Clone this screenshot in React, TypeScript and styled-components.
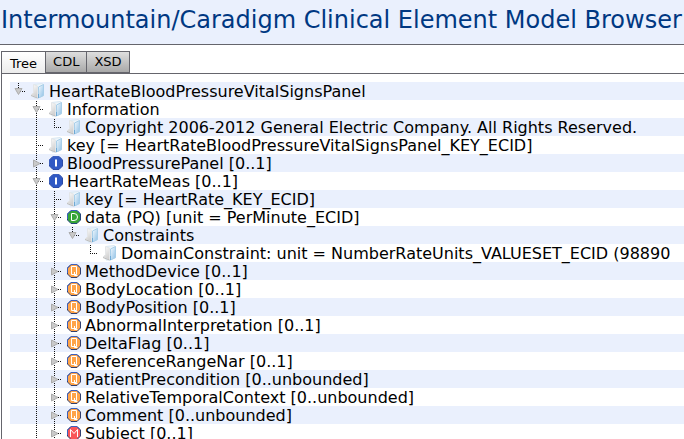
import React, { useState } from "react";
import styled, { createGlobalStyle, css } from "styled-components";

const line = "#65656c";
const stripe = "#eaf0fd";

const GlobalStyle = createGlobalStyle`
  * { box-sizing: border-box; }
  body { margin: 0; background: #fff; }
`;

const Page = styled.div`
  display: flex;
  flex-direction: column;
  height: 100vh;
  overflow: hidden;
  color: #000;
  font-family: "DejaVu Sans", Verdana, sans-serif;
`;

const Header = styled.header`
  flex: none;
  padding: 6px 0 9px 1px;
  background: ${stripe};
  border-bottom: 1px solid ${line};
`;

const Title = styled.h1`
  margin: 0;
  font-size: 24px;
  line-height: 29px;
  font-weight: 400;
  color: #003882;
  white-space: nowrap;
`;

const Tabs = styled.div`
  display: flex;
  flex: none;
  padding: 6px 0 0 1px;
`;

const Tab = styled.button<{ $active: boolean }>`
  height: 22px;
  margin: 0 -1px 0 0;
  padding: 0 7px;
  border: 1px solid ${line};
  background: linear-gradient(#dedede, #a9a9a9);
  color: #000;
  font-family: inherit;
  font-size: 13px;
  line-height: 18px;
  ${(p) =>
    p.$active &&
    css`
      padding: 2px 8px 0;
      border-bottom: 0;
      background: linear-gradient(#fff, #ececec);
    `}
`;

const Panel = styled.main`
  flex: 1;
  min-height: 0;
  margin-left: 1px;
  padding: 8px 0 0 8px;
  border: solid ${line};
  border-width: 1px 0 0 1px;
  overflow: hidden;
`;

const Tree = styled.ul`
  margin: 0;
  padding: 0;
  list-style: none;
`;

const Row = styled.li`
  display: flex;
  align-items: center;
  height: 18px;
  white-space: nowrap;
  font-size: 16px;
  line-height: 18px;
  &:nth-child(odd) { background: ${stripe}; }
`;

const Cell = styled.span`
  flex: none;
  width: 18px;
  height: 18px;
`;

const Toggle = styled.button`
  flex: none;
  width: 18px;
  height: 18px;
  padding: 0;
  border: 0;
  background: none;
`;

const Drawing = styled.svg`
  display: block;
  flex: none;
`;

const Label = styled.span`
  padding: 2px 0 0 3px;
`;

/* One character per column left of the icon:
   " " empty, "|" passing line, "t" branch, "l" last branch,
   "o" open, "c" closed, "e" open and last, "r" open root */
type Kind = "folder" | "I" | "D" | "Q" | "M";
type Item = [string, Kind, string];

const items: Item[] = [
  ["r", "folder", "HeartRateBloodPressureVitalSignsPanel"],
  [" o", "folder", "Information"],
  [" |l", "folder", "Copyright 2006-2012 General Electric Company. All Rights Reserved."],
  [" t", "folder", "key [= HeartRateBloodPressureVitalSignsPanel_KEY_ECID]"],
  [" c", "I", "BloodPressurePanel [0..1]"],
  [" o", "I", "HeartRateMeas [0..1]"],
  [" |t", "folder", "key [= HeartRate_KEY_ECID]"],
  [" |o", "D", "data (PQ) [unit = PerMinute_ECID]"],
  [" ||e", "folder", "Constraints"],
  [" || l", "folder", "DomainConstraint: unit = NumberRateUnits_VALUESET_ECID (98890"],
  [" |c", "Q", "MethodDevice [0..1]"],
  [" |c", "Q", "BodyLocation [0..1]"],
  [" |c", "Q", "BodyPosition [0..1]"],
  [" |c", "Q", "AbnormalInterpretation [0..1]"],
  [" |c", "Q", "DeltaFlag [0..1]"],
  [" |c", "Q", "ReferenceRangeNar [0..1]"],
  [" |c", "Q", "PatientPrecondition [0..unbounded]"],
  [" |c", "Q", "RelativeTemporalContext [0..unbounded]"],
  [" |c", "Q", "Comment [0..unbounded]"],
  [" |c", "M", "Subject [0..1]"],
];

const Guide = ({ code }: { code: string }) => {
  const full = "|toc".includes(code);
  return (
    <Drawing width="18" height="18" viewBox="0 0 18 18" aria-hidden="true">
      {code !== " " && (
        <path d={full ? "M8.5 1V18" : "M8.5 1V10"} stroke="#111" strokeDasharray="1 1" />
      )}
      {!" |".includes(code) && <path d="M8 9.5H15" stroke="#111" strokeDasharray="1 1" />}
      {"oer".includes(code) && <path d="M5 6.5H12L8.5 12.5Z" fill="#c9c9c9" stroke="#acacac" />}
      {code === "c" && <path d="M5.5 6V13L12 9.5Z" fill="#c9c9c9" stroke="#acacac" />}
    </Drawing>
  );
};

const badge = {
  I: ["#3059c4", "#2c4ba6", "M9 5.5H11V12.5H9Z"],
  D: ["#36a536", "#24467c", "M7.5 5.5V12.5H10Q13.5 12.5 13.5 9T10 5.5Z"],
  Q: ["#ffa449", "#303f70", "M7.5 4.5H12.5V12.5H7.5ZM10.5 10V13.5H13.5"],
  M: ["#fa5558", "#303f70", "M6.5 13V5.5L10 9.5L13.5 5.5V13"],
} as const;

const NodeIcon = ({ kind }: { kind: Kind }) => {
  if (kind === "folder") {
    return (
      <Drawing width="18" height="18" viewBox="0 0 18 18" aria-hidden="true">
        <defs>
          <linearGradient id="page" x2="1" y2="1">
            <stop stopColor="#f4fafe" />
            <stop offset="1" stopColor="#8fc0e6" />
          </linearGradient>
          <linearGradient id="cover" x2="0.4" y2="1">
            <stop stopColor="#fff" />
            <stop offset="1" stopColor="#d0d0d0" />
          </linearGradient>
        </defs>
        <path d="M6 2.5L14 1.5L15.5 2.5V14L10 16H6Z" fill="#edf5fb" stroke="#d9e8f3" />
        <path d="M10.5 5L15.5 2.5V13.5L10.5 16Z" fill="url(#page)" stroke="#a9cfe9" />
        <path d="M3 13L5.5 10.5V2.5L9.5 4V16Z" fill="url(#cover)" stroke="#e4e6e8" />
        <path d="M3 13.5L9.5 16" stroke="#bcbcbc" />
        <path d="M10.5 12V16" stroke="#6faad6" />
      </Drawing>
    );
  }
  const [fill, edge, glyph] = badge[kind];
  return (
    <Drawing width="18" height="18" viewBox="0 0 18 18" aria-hidden="true">
      <path d="M7 2.5H13L16.5 6V12L13 15.5H7L3.5 12V6Z" fill={fill} stroke={edge} />
      <path d="M3.5 11V6L7 2.5H13L15.5 5" fill="none" stroke="#3c60be" />
      <path d={glyph} fill={kind === "I" ? "#fff" : "none"} stroke={kind === "I" ? "none" : "#fff"} />
    </Drawing>
  );
};

const tabs = ["Tree", "CDL", "XSD"];

export default function App() {
  const [active, setActive] = useState("Tree");
  return (
    <Page>
      <GlobalStyle />
      <Header>
        <Title>Intermountain/Caradigm Clinical Element Model Browser</Title>
      </Header>
      <Tabs role="tablist">
        {tabs.map((name) => (
          <Tab
            key={name}
            role="tab"
            aria-selected={name === active}
            $active={name === active}
            onClick={() => setActive(name)}
          >
            {name}
          </Tab>
        ))}
      </Tabs>
      <Panel>
        <Tree role="tree" aria-label="Clinical element model">
          {items.map(([guides, kind, label]) => (
            <Row key={label} role="treeitem" aria-level={guides.length}>
              {guides.split("").map((code, i) =>
                "ocer".includes(code) ? (
                  <Toggle key={i} aria-label={`${code === "c" ? "Expand" : "Collapse"} ${label}`}>
                    <Guide code={code} />
                  </Toggle>
                ) : (
                  <Cell key={i}>
                    <Guide code={code} />
                  </Cell>
                )
              )}
              <NodeIcon kind={kind} />
              <Label>{label}</Label>
            </Row>
          ))}
        </Tree>
      </Panel>
    </Page>
  );
}
